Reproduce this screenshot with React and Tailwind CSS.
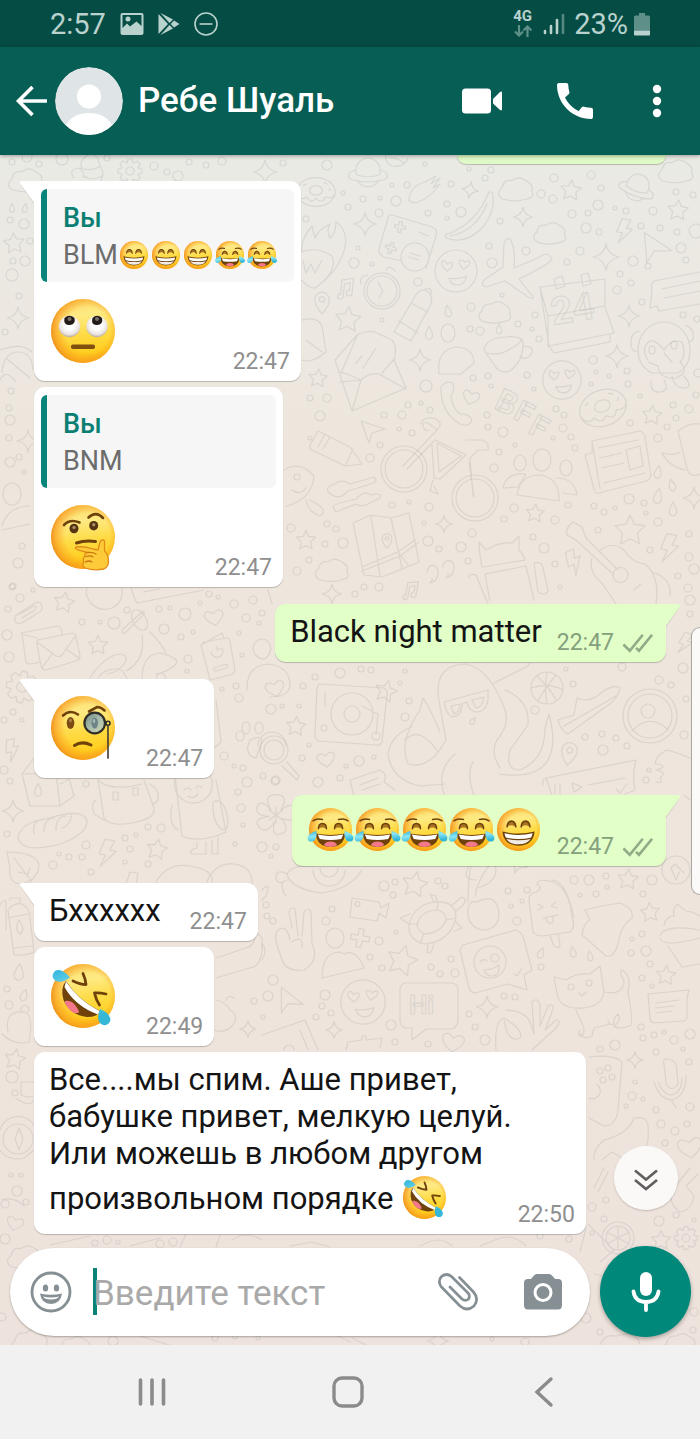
import { useState } from 'react'
import clsx from 'clsx'

/* ---------- emoji ---------- */

function EmojiDefs() {
  return (
    <svg className="absolute size-0" aria-hidden="true">
      <defs>
        <linearGradient id="face" x1="0.45" y1="0" x2="0.6" y2="1">
          <stop offset="0" stopColor="#fbdc6c" />
          <stop offset="0.25" stopColor="#feea84" />
          <stop offset="0.55" stopColor="#fedb45" />
          <stop offset="0.85" stopColor="#ffcf1e" />
          <stop offset="1" stopColor="#fbb01c" />
        </linearGradient>
        <radialGradient id="rim" cx="0.57" cy="0.48" r="0.58">
          <stop offset="0.6" stopColor="#f99a1c" stopOpacity="0" />
          <stop offset="0.86" stopColor="#f99a1c" stopOpacity="0.65" />
          <stop offset="1" stopColor="#ea8a1d" stopOpacity="0.95" />
        </radialGradient>
        <radialGradient id="eyeball" cx="0.5" cy="0.4" r="0.6">
          <stop offset="0.4" stopColor="#ffffff" />
          <stop offset="0.8" stopColor="#e9e3e0" />
          <stop offset="1" stopColor="#b9a79b" />
        </radialGradient>
        <linearGradient id="tear" x1="0" y1="0" x2="0.4" y2="1">
          <stop offset="0" stopColor="#2fb4dc" />
          <stop offset="0.5" stopColor="#8ce6f5" />
          <stop offset="1" stopColor="#35b8d8" />
        </linearGradient>
        <linearGradient id="lens" x1="0" y1="0" x2="1" y2="1">
          <stop offset="0" stopColor="#6f8780" />
          <stop offset="0.5" stopColor="#a9bcae" />
          <stop offset="1" stopColor="#d3d8b0" />
        </linearGradient>
      </defs>
    </svg>
  )
}

const BROWN = '#6f420c'

const faces = {
  beam: (
    <>
      <path d="M15 28Q16 19 21.500 19T28 28Q21.500 23 15 28ZM36 28Q37 19 42.500 19T49 28Q42.500 23 36 28Z" fill="#a87322" />
      <path d="M15 28Q16 19.500 21.500 19.500T28 28M36 28Q37 19.500 42.500 19.500T49 28" fill="none" stroke={BROWN} strokeWidth="2.4" strokeLinecap="round" />
      <path d="M8 35Q32 41 56 35Q54 56 32 56T8 35Z" fill={BROWN} />
      <path d="M11 37.500Q32 42.500 53 37.500L51 44Q32 48.500 13 44Z" fill="#fff" />
      <path d="M14 46Q32 50 50 46Q45 54 32 54T14 46Z" fill="#f1ebe4" />
    </>
  ),
  joy: (
    <>
      <path d="M6 19Q11 15 20 17M58 19Q53 15 44 17" fill="none" stroke={BROWN} strokeWidth="2.4" strokeLinecap="round" />
      <path d="M14 31Q14 23 20 23T26 31Q20 27 14 31ZM38 31Q38 23 44 23T50 31Q44 27 38 31Z" fill="#a87322" />
      <path d="M14 31Q14 23 20 23T26 31M38 31Q38 23 44 23T50 31" fill="none" stroke={BROWN} strokeWidth="2.2" strokeLinecap="round" />
      <path d="M10 38Q32 42 54 38Q52 58 32 58T10 38Z" fill={BROWN} />
      <path d="M13 39.500Q32 43.500 51 39.500L48 46Q32 49 16 46Z" fill="#fff" />
      <path d="M22 55Q25 50 32 50T42 55Q38 58 32 58T22 55Z" fill="#f4788a" />
      <path d="M11 34Q13 49 4 50Q-3 50-2 43Q0 38 11 34ZM53 34Q51 49 60 50Q67 50 66 43Q64 38 53 34Z" fill="url(#tear)" />
    </>
  ),
  roll: (
    <>
      <circle cx="18.500" cy="27.500" r="10.700" fill="url(#eyeball)" />
      <circle cx="46" cy="27.500" r="10.700" fill="url(#eyeball)" />
      <path d="M13.500 19Q18.500 14.500 23.500 19Q25 25.500 18.500 26T13.500 19ZM41.500 19Q46 14.500 51 19Q52.500 25.500 46 26T41.500 19Z" fill="#221a16" />
      <circle cx="18.500" cy="20" r="2" fill="#77706c" />
      <circle cx="46" cy="20" r="2" fill="#77706c" />
      <rect x="20" y="45.500" width="24" height="4.500" rx="1.800" fill="#80500f" />
    </>
  ),
  think: (
    <>
      <path d="M13 20Q19 13.500 28.500 17.500M37.500 12.500Q45 5.500 52 13" fill="none" stroke={BROWN} strokeWidth="2.6" strokeLinecap="round" />
      <ellipse cx="23" cy="23.500" rx="4.500" ry="4.800" fill="#553412" />
      <ellipse cx="42.700" cy="20.700" rx="4.500" ry="4.800" fill="#553412" />
      <circle cx="23" cy="22.500" r="1.700" fill="#a98c68" />
      <circle cx="42.700" cy="19.700" r="1.700" fill="#a98c68" />
      <path d="M25.500 38Q34 35 44.500 36.500" fill="none" stroke={BROWN} strokeWidth="3" strokeLinecap="round" />
      <path
        d="M25 42Q33 41 42 44L47 45L49 37Q51 33.500 53.500 36V46Q57.500 50 57.500 56T53 64Q43 66 34 63Q30 60 33 57Q31 54 34 51Q33 49 36 47.500L27 45Q23 43 25 42Z"
        fill="#fdcb3a"
        stroke="#e18c18"
        strokeWidth="1.300"
      />
      <path d="M35 51.500Q39 50 42 52M34.500 57Q38 55 41 57M36 47.500Q42 47 45 49" fill="none" stroke="#c7760f" strokeWidth="1.300" strokeLinecap="round" />
    </>
  ),
  monocle: (
    <>
      <path d="M12 19.500Q19 13 27 18.500M38 15.500L46 11Q50 11 53.500 14.500" fill="none" stroke={BROWN} strokeWidth="2.6" strokeLinecap="round" />
      <ellipse cx="19.500" cy="27" rx="3.800" ry="6" fill="#7a4a12" />
      <ellipse cx="19.500" cy="24.500" rx="1.500" ry="2" fill="#a67e4b" />
      <circle cx="43.700" cy="27" r="10.300" fill="url(#lens)" stroke="#2f2d28" strokeWidth="2.2" />
      <ellipse cx="43.700" cy="27" rx="3.300" ry="5.500" fill="#6d8488" />
      <ellipse cx="43" cy="25" rx="1.300" ry="2" fill="#a9bab8" />
      <circle cx="57" cy="27.300" r="2" fill="none" stroke="#2f2d28" strokeWidth="1.600" />
      <path d="M57 29.500V62" stroke="#4c4437" strokeWidth="1.700" strokeLinecap="round" />
      <path d="M23.500 49.500Q31 44.500 40 49" fill="none" stroke={BROWN} strokeWidth="3" strokeLinecap="round" />
    </>
  ),
  rofl: (
    <>
      <path d="M22 17Q29 20.500 35 20.500Q34.500 15 32 9.500M55 30Q48 28.500 43.500 29Q45 36 48.500 41" fill="none" stroke={BROWN} strokeWidth="2.8" strokeLinecap="round" strokeLinejoin="round" />
      <path d="M15 17Q27 36 49 47Q47 53 36 53Q19 51 12.500 36Q9 24 15 17Z" fill={BROWN} />
      <path d="M15 17.500Q27 36 48.500 47L47 50.500Q24 42 13.500 23Z" fill="#fff" />
      <path d="M14 37Q20 36 24 41T28 48.500Q23 51 18 45T14 37Z" fill="#f4788a" />
      <path d="M19 13.500Q10 20 4 16.500Q-1 12 4 7Q10 3 19 13.500ZM49 45Q59 49 59.500 56Q58 62 52 61Q44 58 49 45Z" fill="url(#tear)" />
    </>
  ),
}

function Emoji({ name, label, className }) {
  return (
    <svg viewBox="0 0 64 64" role="img" aria-label={label} className={clsx('overflow-visible', className)}>
      <circle cx="32" cy="32" r="32" fill="url(#face)" />
      <circle cx="32" cy="32" r="32" fill="url(#rim)" />
      {faces[name]}
    </svg>
  )
}

const BigEmoji = (props) => <Emoji {...props} className="mx-[2px] mt-2 mb-[6px] block size-16" />
const TextEmoji = (props) => <Emoji {...props} className="mx-[2px] mt-1 mb-[3px] inline-block size-[43px] align-[-13px]" />
const QuoteEmoji = (props) => <Emoji {...props} className="mx-[2px] inline-block size-7 align-[-5px]" />

/* ---------- wallpaper ---------- */

const shapes = {
  star: 'M0-12L3.500-4.500L12-3.500L6 2.500L7.500 11L0 7L-7.500 11L-6 2.500L-12-3.500L-3.500-4.500Z',
  sparkle: 'M0-12Q1.500-2 12 0Q1.500 2 0 12Q-1.500 2-12 0Q-1.500-2 0-12Z',
  cloud: 'M-10 7Q-15 3-10-1Q-9-7-3-6Q2-10 7-6Q13-3 11 1Q14 6 8 7Q0 10-10 7Z',
  bolt: 'M-4-12H5L2-3H8L-4 13L-1 2H-7Z',
  drop: 'M0-10Q7 2 5 6T0 10T-5 6T0-10Z',
  heart: 'M0 10Q-12 2-11-4Q-8-11 0-4Q8-11 11-4Q12 2 0 10Z',
  plane: 'M-12-10L12-2L-1 2L-4 12Z',
  plus: 'M-3-11H3V-3H11V3H3V11H-3V3H-11V-3H-3Z',
  note: 'M-4 8V-8L8-11V5A3 3 0 1 1 5 2V-6L-1-4V9A3 3 0 1 1-4 6',
  pin: 'M0 12Q-9 2-8-4A8 8 0 0 1 8-4Q9 2 0 12ZM-3-4A3 3 0 1 0 3-4A3 3 0 1 0-3-4',
  planet: 'M-8-2A8 8 0 0 1 8-2M-7 5A8 8 0 0 0 7 5M-8-2Q-15 0-12 4Q0 8 12 4Q15 0 8-2M-8-2V1Q0 4 8 1V-2',
  donut: 'M-12 0A12 9 0 1 1 12 0A12 9 0 1 1-12 0M-4-1A4 3 0 1 1 4-1A4 3 0 1 1-4-1M-12 1Q-9 6-6 3Q-3 8 0 4Q4 8 6 3Q10 5 12 1M-8-4L-6-5M5-6L7-5M8-1L9-2',
  face: 'M-12 0A12 12 0 1 1 12 0A12 12 0 1 1-12 0M-5 0Q-9-3-8-5T-5-4Q-2-6-2-4T-5 0M4-1Q1-5 2-6T5-5Q8-7 8-5T4-1M-4 4Q1 5 6 3Q5 8 1 8T-4 4',
  gear: 'M-2-12H2L3-8L7-10L10-7L8-3L12-2V2L8 3L10 7L7 10L3 8L2 12H-2L-3 8L-7 10L-10 7L-8 3L-12 2V-2L-8-3L-10-7L-7-10L-3-8ZM-4 0A4 4 0 1 0 4 0A4 4 0 1 0-4 0',
  flower: 'M-3-3Q-8-12 0-12T3-3Q11-9 12-2T3 2Q9 9 3 11T-1 4Q-6 12-10 7T-4 1Q-13 0-11-5T-3-3M-4-3L4 3M-4 3L4-3M0-5V5',
}

// kind, x, y, scale, rotation
const doodles = [
  ['planet', 368, 173, 1.5, 0], ['planet', 637, 188, 1.4, 20], ['donut', 316, 192, 1.6, 0], ['donut', 603, 408, 2, -20],
  ['sparkle', 470, 190, 0.7, 10], ['sparkle', 365, 224, 0.95, 0], ['sparkle', 523, 217, 0.8, 0], ['sparkle', 606, 257, 1.1, 0],
  ['sparkle', 629, 316, 0.9, 0], ['sparkle', 617, 356, 0.95, 0], ['sparkle', 420, 360, 0.9, 0], ['sparkle', 444, 524, 0.7, 0],
  ['sparkle', 332, 594, 0.8, 0], ['sparkle', 694, 498, 0.9, 0], ['sparkle', 18, 318, 0.9, 0], ['sparkle', 265, 172, 1, 0],
  ['sparkle', 28, 441, 0.9, 0], ['sparkle', 13, 811, 0.9, 0], ['sparkle', 487, 1007, 0.9, 0], ['sparkle', 334, 1030, 0.7, 0],
  ['sparkle', 635, 1060, 0.7, 0], ['sparkle', 248, 1029, 0.7, 0], ['sparkle', 438, 1341, 0.9, 0], ['sparkle', 518, 864, 0.8, 20],
  ['cloud', 516, 189, 1.4, 0], ['cloud', 550, 233, 1.3, 0], ['cloud', 676, 171, 1.4, 0], ['cloud', 495, 312, 1.3, 0],
  ['cloud', 332, 570, 1.35, 0], ['cloud', 26, 180, 1.4, 0], ['cloud', 25, 1257, 1.4, 0], ['cloud', 30, 1342, 1.5, 0],
  ['cloud', 680, 1344, 1.3, 0], ['cloud', 75, 1347, 1.3, 0],
  ['star', 571, 190, 0.85, 5], ['star', 678, 210, 0.85, 5], ['star', 348, 319, 1.05, 5], ['star', 318, 378, 0.75, 5],
  ['star', 652, 415, 0.8, 5], ['star', 535, 513, 0.75, 5], ['star', 630, 530, 1.25, 0], ['star', 306, 540, 0.8, 0],
  ['star', 14, 243, 0.85, -5], ['star', 386, 691, 0.9, 15], ['star', 296, 726, 0.8, 5], ['star', 64, 602, 0.85, 10],
  ['star', 98, 645, 0.8, 0], ['star', 157, 849, 0.85, 10], ['star', 15, 1059, 0.85, 10], ['star', 415, 884, 1.05, 10],
  ['star', 628, 879, 0.85, 5], ['star', 650, 912, 0.8, -5], ['star', 666, 975, 0.8, 5], ['star', 402, 960, 1.25, 15],
  ['star', 661, 1240, 0.8, 0],
  ['bolt', 624, 231, 1, 10], ['bolt', 669, 548, 1.15, 10], ['bolt', 574, 562, 1, -25], ['bolt', 107, 853, 1.1, 10],
  ['bolt', 12, 750, 0.9, -10], ['bolt', 685, 643, 0.85, 20],
  ['drop', 448, 311, 0.6, -10], ['drop', 429, 333, 0.65, 0], ['drop', 499, 329, 0.5, 0], ['drop', 658, 472, 0.65, 10],
  ['drop', 672, 485, 0.6, -15], ['drop', 658, 496, 0.75, 10], ['drop', 673, 509, 0.7, 0], ['drop', 19, 972, 0.85, 5],
  ['drop', 24, 995, 0.6, 20], ['drop', 541, 953, 0.55, 20], ['drop', 573, 952, 0.55, -10], ['drop', 590, 956, 0.5, -10],
  ['drop', 12, 208, 0.45, 0], ['drop', 25, 208, 0.45, 10], ['drop', 473, 721, 0.4, 40], ['drop', 38, 790, 0.65, 0],
  ['heart', 326, 759, 0.8, -10], ['heart', 471, 397, 0.75, 15], ['heart', 453, 1042, 1, 10], ['heart', 690, 1147, 1.1, -10],
  ['heart', 275, 688, 0.85, -15], ['heart', 214, 617, 0.85, -10], ['heart', 15, 1223, 0.75, 15],
  ['plane', 373, 431, 1, 0], ['plane', 656, 249, 1.3, 15], ['plane', 290, 1002, 1.1, 20],
  ['plus', 400, 227, 0.5, 10], ['plus', 391, 248, 0.5, 20], ['plus', 360, 938, 0.85, 10],
  ['note', 345, 288, 0.95, 5], ['note', 410, 590, 0.85, 10],
  ['pin', 322, 303, 0.9, 0], ['pin', 387, 541, 0.6, 0], ['pin', 569, 754, 0.95, 10],
  ['face', 456, 271, 1.75, 0], ['face', 562, 380, 1.6, 0], ['face', 363, 1002, 1.85, 0],
  ['gear', 130, 171, 1, 0], ['gear', 22, 687, 1.3, 10], ['gear', 686, 1238, 0.95, 0],
  ['flower', 276, 815, 1.7, 0],
]

// x, y, r
const bubbles = [
  [12, 162, 3], [27, 157, 5], [39, 164, 3], [62, 159, 6], [107, 158, 3], [154, 166, 4], [167, 172, 3], [178, 176, 5], [189, 162, 3], [206, 165, 3],
  [222, 161, 4], [283, 163, 3], [327, 165, 5], [10, 220, 3], [24, 224, 5], [30, 241, 3], [13, 261, 3], [25, 261, 5], [12, 275, 6], [19, 296, 3],
  [5, 332, 3], [306, 219, 3], [11, 391, 3], [9, 408, 3], [10, 420, 5], [9, 438, 3], [10, 462, 5], [19, 457, 3], [24, 472, 2], [22, 546, 3],
  [18, 563, 5], [13, 586, 3], [37, 541, 3], [310, 398, 3], [310, 438, 2], [297, 477, 3], [291, 528, 4], [309, 560, 3], [297, 571, 4],
  [425, 164, 2], [407, 185, 3], [392, 185, 2], [363, 199, 3], [380, 198, 2], [396, 201, 5], [343, 193, 2], [348, 207, 3], [379, 213, 4], [428, 213, 3],
  [451, 184, 3], [447, 204, 3], [461, 212, 5], [447, 218, 2], [469, 169, 2], [485, 178, 3], [491, 170, 3], [541, 194, 4], [553, 199, 4], [554, 178, 4],
  [591, 175, 4], [601, 188, 3], [598, 205, 5], [572, 214, 4], [588, 213, 3], [615, 208, 2], [626, 211, 3], [653, 211, 4], [676, 192, 3], [693, 195, 3],
  [500, 221, 3], [586, 228, 5], [599, 232, 3], [641, 226, 3], [660, 228, 3], [677, 232, 3], [696, 231, 7], [681, 248, 5], [686, 260, 3], [648, 266, 3],
  [633, 261, 5], [567, 262, 3], [580, 251, 4], [526, 251, 4], [492, 263, 5], [489, 246, 3], [358, 248, 2], [354, 263, 5], [372, 264, 2], [418, 282, 4],
  [502, 295, 2], [471, 307, 4], [470, 329, 3], [480, 331, 4], [518, 324, 3], [535, 315, 3], [532, 329, 2], [539, 339, 3], [617, 290, 4], [631, 283, 3],
  [620, 274, 3], [642, 302, 3], [683, 315, 3], [697, 319, 3], [382, 320, 2], [426, 386, 6], [408, 405, 3], [421, 403, 2], [430, 410, 3],
  [473, 378, 3], [488, 376, 3], [491, 386, 2], [527, 375, 3], [534, 389, 2], [593, 360, 4], [596, 372, 2], [609, 376, 2], [627, 371, 3], [591, 384, 2],
  [628, 384, 3], [640, 396, 2], [673, 405, 3], [689, 409, 4], [676, 418, 3], [667, 427, 3], [698, 373, 4], [696, 395, 3], [320, 416, 5], [327, 398, 4],
  [384, 415, 3], [402, 415, 4], [399, 429, 2], [412, 433, 3], [380, 445, 3], [370, 458, 4], [487, 415, 3], [488, 427, 3], [503, 432, 5], [515, 445, 2],
  [499, 452, 3], [556, 409, 3], [564, 415, 3], [563, 428, 4], [553, 438, 2], [571, 437, 3], [575, 448, 3], [494, 468, 4], [658, 438, 4], [630, 423, 3],
  [392, 505, 3], [409, 502, 2], [429, 507, 4], [514, 508, 4], [504, 519, 3], [472, 533, 4], [555, 520, 4], [568, 505, 3], [594, 506, 3], [604, 512, 3],
  [629, 499, 5], [644, 503, 3], [646, 513, 2], [658, 522, 4], [615, 508, 2], [598, 530, 3], [424, 523, 2], [428, 541, 5], [439, 549, 3], [461, 547, 5],
  [468, 561, 3], [533, 537, 3], [544, 548, 5], [555, 564, 3], [560, 587, 2], [650, 550, 3], [689, 534, 3], [689, 557, 4], [694, 569, 5], [678, 576, 3],
  [343, 543, 5], [336, 529, 3], [327, 524, 3], [325, 544, 3], [364, 587, 3], [379, 587, 4], [355, 594, 3], [688, 588, 4], [690, 600, 5], [690, 614, 3],
  [12, 587, 3], [20, 598, 4], [8, 609, 3], [33, 590, 2], [7, 635, 5], [9, 657, 5], [82, 622, 3], [100, 622, 2], [114, 623, 6], [127, 610, 3],
  [159, 609, 3], [170, 608, 2], [185, 614, 6], [164, 629, 5], [181, 637, 3], [193, 632, 2], [188, 659, 4], [187, 671, 2], [200, 603, 2], [209, 594, 3],
  [218, 597, 2], [234, 604, 4], [253, 600, 4], [246, 618, 4], [262, 613, 3], [259, 623, 2], [239, 633, 2], [242, 655, 2],
  [315, 677, 3], [340, 673, 5], [361, 669, 3], [371, 670, 3], [303, 686, 3], [271, 709, 5], [282, 706, 2], [299, 706, 2], [324, 728, 3], [405, 717, 4],
  [409, 701, 3], [400, 683, 2], [405, 671, 2], [566, 669, 2], [573, 684, 3], [622, 667, 4], [659, 680, 4], [671, 685, 3], [535, 710, 4], [585, 737, 3],
  [602, 734, 3], [616, 738, 3], [603, 750, 5], [627, 746, 3], [683, 668, 5], [684, 735, 4], [686, 699, 3], [302, 758, 3], [309, 745, 2], [346, 766, 2],
  [359, 761, 5], [374, 757, 2], [318, 782, 5], [340, 778, 3], [275, 781, 4], [646, 780, 3], [649, 770, 2], [4, 720, 3], [13, 712, 3], [22, 720, 2],
  [10, 781, 3], [4, 770, 4], [86, 784, 3], [7, 834, 3], [86, 845, 4], [59, 854, 2], [69, 857, 3], [82, 857, 3], [53, 865, 4], [91, 872, 3],
  [125, 838, 3], [136, 835, 2], [148, 827, 3], [161, 828, 4], [130, 849, 3], [125, 862, 2], [148, 864, 3], [235, 844, 2], [262, 847, 5], [276, 847, 3],
  [271, 856, 2], [241, 808, 4], [238, 792, 3], [247, 782, 5], [243, 825, 2], [263, 776, 3], [276, 780, 4], [239, 698, 4], [236, 686, 3], [222, 689, 2],
  [234, 766, 2], [243, 768, 3], [224, 756, 4], [7, 989, 3], [9, 1005, 4], [267, 916, 3], [266, 905, 3], [254, 1001, 3], [263, 1017, 2], [273, 980, 5],
  [268, 996, 5], [273, 921, 3], [326, 921, 4], [332, 909, 3], [396, 932, 2], [379, 941, 4], [370, 957, 3], [382, 968, 3], [431, 967, 3],
  [440, 974, 3], [451, 959, 3], [455, 973, 4], [384, 886, 5], [395, 882, 3], [393, 895, 3], [438, 881, 3], [445, 886, 3], [508, 891, 3], [527, 890, 3],
  [511, 906, 2], [517, 921, 4], [522, 901, 2], [574, 880, 4], [589, 880, 5], [606, 876, 3], [607, 887, 2], [580, 895, 2], [596, 894, 3], [652, 880, 5],
  [643, 894, 3], [642, 934, 3], [632, 939, 2], [631, 953, 3], [646, 951, 5], [650, 964, 3], [642, 978, 3], [652, 986, 2], [541, 967, 3], [504, 996, 3],
  [515, 997, 3], [469, 1014, 3], [475, 1027, 3], [485, 1040, 5], [428, 1044, 3], [395, 1042, 3], [391, 1025, 5], [331, 1013, 3], [325, 995, 5], [322, 1006, 3],
  [316, 1017, 3], [641, 1027, 3], [643, 1038, 3], [654, 1035, 3], [664, 1032, 2], [674, 1040, 4], [690, 1034, 5], [683, 1049, 2], [656, 1052, 3], [615, 1045, 5],
  [600, 1049, 3], [635, 1082, 2], [632, 1096, 4], [643, 1099, 2], [626, 1106, 2], [656, 1110, 3], [661, 1124, 4], [675, 1131, 4], [687, 1124, 3], [690, 1107, 4],
  [689, 1062, 3], [665, 1143, 3], [600, 1071, 3], [608, 1068, 3], [603, 1080, 3], [612, 1077, 3], [606, 1200, 3], [592, 1207, 4], [604, 1219, 3], [592, 1233, 2],
  [540, 1236, 3], [569, 1239, 3], [659, 1221, 5], [676, 1215, 3], [694, 1220, 2], [95, 1243, 3], [107, 1240, 4], [118, 1242, 2], [160, 1244, 4], [173, 1242, 4],
  [113, 1341, 5], [215, 1338, 3], [235, 1337, 2], [258, 1338, 2], [492, 1339, 2], [525, 1342, 4], [586, 1318, 5], [600, 1332, 3], [694, 1312, 4], [693, 1330, 3],
  [12, 1077, 6], [15, 1093, 3], [11, 1175, 2], [21, 1175, 2], [17, 1191, 5], [26, 1202, 3], [5, 1204, 4], [5, 1239, 5], [2, 1317, 4],
]

// one-off drawings, each on its own spot of the wallpaper
const drawings = [
  // open hand, banana, burning heart
  'M409 200Q410 186 425 182L436 176L431 184L440 178L433 188L440 184Q430 198 418 202Q411 204 409 200Z',
  'M445 235Q476 225 489 192L492 192Q497 210 482 228Q465 245 446 238ZM450 236Q475 232 487 204',
  'M301 280Q313 292 318 286Q344 266 346 240Q344 226 336 222Q336 234 330 238Q326 230 330 224Q318 230 315 238L312 226Q300 240 302 252M301 252Q318 246 332 256Q338 270 318 286',
  'M303 261L306 273L311 264L315 273L322 260',
  // calculator
  'M392 215L432 227Q438 229 436 236L426 268M402 261L384 257Q378 254 379 249L388 218Q389 214 392 215M401 257A14 14 0 1 1 429 257A14 14 0 1 1 401 257M410 253L420 256M409 257L419 260M419 232L428 236',
  // alarm clock
  'M364 291A18 18 0 1 1 400 291A18 18 0 1 1 364 291M367 291A15 15 0 1 1 397 291A15 15 0 1 1 367 291M378 282L383 291L379 298M361 284Q359 276 368 275M386 270Q388 264 395 271',
  // airplane
  'M504 244Q506 236 511 240Q516 252 514 268L538 258Q548 250 552 259Q550 264 519 279L533 297Q534 300 528 297L505 281L486 287Q480 286 484 280L503 267Z',
  // water bottle
  'M394 332L414 298Q419 289 425 290Q434 294 431 304L411 341ZM399 321L418 333M411 303L428 312M424 290L428 288L432 291L430 295',
  // envelope
  'M335 360L357 335Q366 330 375 332L392 340Q398 346 394 360L406 388L352 411ZM341 373L357 336M339 382L361 380L352 411M361 380Q370 372 379 374L406 389M341 372Q355 377 361 380M395 358L382 373M356 363L362 356M363 368L376 348',
  // person with a heart
  'M441 333A7 9 0 1 1 455 333A7 9 0 1 1 441 333M439 374Q436 350 456 347Q474 348 474 363L461 374Z',
  // coffee cup
  'M484 350Q486 338 505 337Q522 335 523 343Q524 360 510 371Q500 374 495 366ZM486 353Q500 356 510 349Q520 344 522 339M523 346Q534 346 532 353Q526 362 520 356',
  // calendar
  'M540 287L605 279V307L614 333L549 346ZM540 287L548 317V347M554 279L562 276L565 286L556 289ZM581 275L588 273L591 284L583 286ZM549 346L554 353L610 342V335M548 316L605 306',
  // chat bubble with lines
  'M700 272L654 281Q650 284 652 290L650 308L657 306L659 311L700 304M662 289L700 281M664 298L700 291',
  // monkey
  'M638 350A26 28 0 1 1 690 350Q690 366 678 373H652Q638 366 638 350M640 331Q630 332 631 345Q632 352 638 352M685 325Q695 328 693 340Q690 343 688 340M648 360Q640 348 650 341Q656 340 664 350Q672 338 682 342Q687 356 680 362Q690 372 676 378Q660 380 658 366L648 362M664 353L672 362M651 381Q650 393 660 392T664 380M672 376Q674 388 684 388T684 376',
  'M649 350A3 4 0 1 0 655 350A3 4 0 1 0 649 350M671 345A3 4 0 1 0 677 345A3 4 0 1 0 671 345',
  // phone receiver
  'M441 387Q446 380 453 383Q455 390 451 396Q452 408 460 414Q468 413 472 420Q469 428 460 424Q440 412 441 387Z',
  // crayon
  'M310 445L318 431L350 447L362 464L345 466L310 449ZM318 447L325 434M323 449L330 437M345 466L353 449',
  // bicycle
  'M381 469A23 23 0 1 1 427 469A23 23 0 1 1 381 469M385 469A19 19 0 1 1 423 469A19 19 0 1 1 385 469M452 498A23 23 0 1 1 498 498A23 23 0 1 1 452 498M456 498A19 19 0 1 1 494 498A19 19 0 1 1 456 498',
  'M403 466L437 430Q424 418 423 425Q424 432 429 430M437 430Q445 422 433 418Q422 417 421 424M407 469L435 440L466 455L440 479L434 478L432 445M437 443L439 472L461 456ZM469 462L474 497M466 440H482Q490 442 488 450H478L470 458L473 496M433 480L430 491L438 494L434 486',
  // group of people
  'M533 460A9 11 0 1 1 551 460A9 11 0 1 1 533 460M514 463A6 8 0 1 1 526 463A6 8 0 1 1 514 463M560 468A6 8 0 1 1 572 468A6 8 0 1 1 560 468M517 495Q520 475 540 475Q560 478 559 501ZM503 488Q506 472 526 474L518 487ZM556 478Q575 478 577 495L563 493',
  // newspaper
  'M592 441L640 431Q644 432 645 437L651 475Q650 480 646 481L599 493Q595 494 594 489L585 455L592 453ZM592 441L600 489M598 448L638 440M600 458L622 453M602 468L624 463M604 483L645 473M626 450L640 446L643 466L630 470Z',
  // mug
  'M678 431Q690 422 700 424M678 431L687 469Q690 478 700 474M662 453Q674 456 680 452M662 453Q668 466 685 470',
  // spoons
  'M328 492Q326 486 333 485Q342 478 350 484L374 477Q378 480 374 483L348 491Q340 500 332 495ZM333 507Q333 504 356 499Q364 490 371 495Q382 492 380 498L370 503Q362 508 356 504L336 512Z',
  // map
  'M353 523L371 515L391 518L409 513L419 562L382 577L364 575ZM371 516L380 576M391 518L402 568M362 567L398 552L415 540M362 571L400 556L418 543M398 552L408 565',
  // android robot
  'M482 567L480 556L479 542L486 550Q498 542 512 543L519 536V550Q524 555 525 560L483 567ZM485 574L526 566L534 600M485 574L490 601M469 578Q468 573 476 575L488 604M534 563Q542 561 543 568L548 590Q546 597 538 592Z',
  // guitar
  'M567 535Q565 528 573 522L582 527L586 538L618 570M567 535L576 540L614 575M613 575A7 7 0 1 0 628 575A7 7 0 1 0 613 575M600 550Q612 541 624 550Q632 563 645 564Q660 576 656 604M592 558Q588 572 602 583L616 604M652 572Q672 578 670 596M634 590L641 584',
  // quotation marks
  'M427 572A5 6 0 1 1 438 572Q438 582 430 583Q433 580 432 578M443 567A5 6 0 1 1 454 567Q454 576 446 578Q449 576 448 574',
  // paper clip
  'M15 616L35 603Q42 600 42 608Q42 612 36 614L22 623Q14 625 15 618ZM22 618L35 610Q38 606 34 606L20 614',
  // letters
  'M37 638L22 634Q20 632 26 632L58 626Q62 627 62 634M22 634L26 662Q28 666 40 662M38 640L72 633Q76 634 76 637L80 656Q80 660 76 661L46 670Q42 670 41 666L37 644Q36 641 38 640ZM37 642L56 656Q62 658 64 652L76 635M42 668L52 654M79 658L66 649',
  // bird, headphones, cup
  'M87 588Q84 596 92 604Q100 612 112 608Q124 602 122 588M122 630L143 611Q146 612 142 616L126 632Q122 636 122 630ZM133 622A6 10 -30 1 0 146 618A6 10 -30 1 0 133 622M142 635Q146 660 126 671M150 632Q162 644 166 653M90 678Q104 656 120 654Q130 656 124 664Q118 672 108 674M98 678Q106 666 122 670L128 680M142 680Q142 654 160 653Q180 658 176 664Q168 672 156 674M156 680A5 7 0 1 1 166 680',
  // passport
  'M201 645L222 633L224 639M201 645L204 642L226 638Q230 638 230 642L235 670Q234 674 230 675L210 680ZM211 652A6 6 0 1 0 222 648L217 650V646M214 668L226 664Q229 666 226 668L216 671Q213 671 214 668Z',
  // newspaper corner, balloon, heart bubble
  'M131 588L136 602Q138 604 142 602L204 590M143 592L160 589M253 649A9 10 0 1 1 271 649Q268 660 262 659Q254 656 253 649M268 590L272 604M247 690Q246 666 268 664Q290 666 290 686Q288 697 270 697',
  // dinosaur and friends around the quotes
  'M0 350Q22 342 32 352M2 372Q4 352 18 352T33 370M6 358L30 378M0 380Q6 368 16 382M302 320Q318 316 322 326L326 352Q312 364 302 360M306 340L322 352M284 470Q300 460 314 476Q312 500 286 506M292 490Q300 496 306 488M310 500Q330 510 320 516Q308 512 306 500M2 530L30 524M2 526Q8 506 30 506M3 494A9 11 0 1 1 21 494A9 11 0 1 1 3 494',
  // turntable
  'M319 684L384 688Q388 690 387 695L382 742Q380 746 376 745L318 741Q314 738 315 734L317 688ZM331 714A21 21 0 1 1 373 714A21 21 0 1 1 331 714M344 714A8 8 0 1 1 360 714A8 8 0 1 1 344 714M362 706L378 714L376 734M325 692V706M372 736A4 4 0 1 1 380 736A4 4 0 1 1 372 736',
  // octopus with sunglasses
  'M438 695Q436 665 465 664Q490 668 505 710Q510 725 497 740Q490 752 500 768M438 695L446 740Q430 770 408 764Q398 742 420 710L423 698Q432 712 440 732M388 755Q390 735 412 727M388 755Q392 780 420 786L445 784M444 794Q436 770 455 754M474 795Q466 774 473 762M505 690Q530 700 528 725L510 750Q505 770 520 770Q545 760 545 728L549 714Q556 740 550 756Q540 780 500 774M492 684L520 670Q532 665 530 660M405 740Q420 725 438 752',
  'M444 702L488 690V700Q486 712 476 712Q468 710 467 702L462 704Q462 716 452 717Q446 714 444 702ZM451 706L460 704Q460 712 454 714ZM472 700L484 697Q482 708 476 708Z',
  // basketball
  'M531 688A16 16 0 1 1 563 688A16 16 0 1 1 531 688M537 676Q550 688 556 700M556 675Q545 688 538 701M531 688Q548 682 563 690M547 672Q544 688 547 704',
  // sneaker
  'M558 720L574 715L577 698Q590 704 602 692Q614 684 620 688Q618 700 604 708L568 734Q560 730 558 720ZM564 726L616 696',
  // contact badge
  'M623 716A27 27 0 1 1 677 716A27 27 0 1 1 623 716M628 716A22 22 0 1 1 672 716A22 22 0 1 1 628 716M641 711A7 7 0 1 1 655 711A7 7 0 1 1 641 711M632 731Q650 712 668 730',
  // voice card
  'M543 785Q542 780 546 778L636 760Q632 775 635 790L625 794M546 778L552 795M572 783L582 787L574 792ZM588 785L625 778M555 784V794M560 784V794M616 789L620 793L627 784',
  'M655 764Q656 756 664 752Q664 748 680 754L690 758M656 770Q668 772 660 778Q664 784 656 782M656 764Q670 766 656 770M684 795L690 800',
  // magnifier
  'M260 750A14 14 0 1 1 288 750A14 14 0 1 1 260 750M264 750A10 10 0 1 1 284 750A10 10 0 1 1 264 750M282 766L297 780L299 776L287 762',
  'M350 780L380 770Q388 774 384 782L395 790M350 780L354 796M360 785L378 778M362 790L380 784',
  // paw and camera
  'M250 740Q262 734 262 742L256 758Q246 756 248 746ZM258 746A14 14 0 1 1 286 746M236 736A4 5 0 1 1 244 736A4 5 0 1 1 236 736M242 728A4 6 0 1 1 250 728A4 6 0 1 1 242 728M255 728A4 6 0 1 1 263 728A4 6 0 1 1 255 728M216 700L221 742L214 748',
  // milk carton
  'M22 774L34 758L56 757L68 774L74 796L60 806L30 806ZM22 774L56 773L60 806M34 758V768M56 773L72 770M60 784L68 780',
  // bread
  'M18 838Q20 822 50 818Q82 808 87 820Q88 834 60 844Q22 854 18 838ZM34 834Q32 820 42 820M44 832Q44 818 54 818M56 830Q56 816 66 816M62 828Q70 826 72 814',
  // backpack
  'M98 780Q110 792 142 784M98 780L104 818Q110 828 136 822Q156 818 154 808L144 780M96 800Q90 804 94 814L104 820M150 784Q160 790 158 800L154 804M113 792H118V800H113ZM133 788H138V795H133Z',
  // astronaut
  'M175 780A18 18 0 1 1 212 788A18 18 0 1 1 175 780M175 775L182 836Q200 844 226 832L216 780M184 790Q188 786 191 790M196 788Q199 784 202 788M188 796Q193 800 198 794M172 805Q168 825 178 830M213 802Q224 796 228 820Q228 834 220 828Q212 820 213 802M197 842V848Q188 850 192 854H206V842M212 840V854H218V838',
  // leaf
  'M7 852Q36 852 39 865Q38 880 22 884Q8 884 10 868ZM14 858L32 882M18 872L28 874L30 868',
  // bottle on the left
  'M8 910Q14 902 22 904Q30 908 30 918L34 952Q26 956 14 955ZM10 900V898H20V903M8 918L28 914M19 920Q26 930 20 934Q14 930 19 920M14 948L32 946',
  // bell
  'M8 1032Q4 1010 24 1012Q34 1014 29 1042Q14 1046 2 1034M22 1012A4 4 0 1 1 28 1012',
  // compass
  'M0 1130A19 19 0 1 1 34 1146M0 1150Q8 1162 24 1158L34 1150M3 1139A15 15 0 1 1 33 1139A15 15 0 1 1 3 1139M19 1128L23 1139L19 1150L15 1139ZM21 1082V1095Q28 1098 34 1096M21 1082H34M17 1099Q32 1108 33 1100',
  // things right of the short bubbles
  'M155 884Q166 862 190 866T212 882M206 884Q214 862 234 864T252 888M126 884L130 872L138 873L136 884M216 958L246 948Q258 944 254 930L262 938Q264 966 250 968L216 978M216 1000Q226 1002 230 1010Q240 1016 232 1026Q224 1034 214 1030M226 1000Q228 994 234 998',
  // fish
  'M287 874Q292 864 316 866M287 874Q290 888 320 893Q350 890 362 870M313 870A15 15 0 0 0 345 870M320 868A9 9 0 0 0 338 868M287 874Q276 868 276 878Q278 886 287 880M282 882Q282 892 286 896',
  // camcorder
  'M352 898L379 902L381 908L389 903L386 918L379 913L377 921L350 917ZM355 904A2 2 0 1 1 360 904A2 2 0 1 1 355 904',
  // turtle
  'M409 925Q414 905 434 902Q456 900 456 918Q450 942 424 944Q408 940 409 925ZM417 925Q420 912 434 910Q446 910 446 920Q442 932 426 934Q418 932 417 925ZM434 902L430 894L436 896L437 902M451 906L462 897Q468 900 462 906L456 911M456 922L462 928L454 931M428 944L427 952Q432 956 434 942M409 924L400 918L410 914M437 910L438 902M446 920L456 918M424 934L420 943M418 924H409',
  // cherry
  'M468 902Q468 888 470 870Q472 862 480 860M477 902Q498 892 499 915Q498 930 482 930Q466 926 468 908Q470 900 477 902M476 896L476 890Q484 868 494 862Q502 880 478 888M476 880Q460 880 470 864',
  // ice cream
  'M529 900L533 932Q536 936 542 936L570 932Q576 926 572 918Q570 890 554 882Q538 878 537 884Q544 888 536 892Q528 894 529 900M552 880Q566 880 574 918M550 936L554 946Q560 950 560 944L558 934M538 904L543 907L538 910M556 902L551 906L557 908M543 918L558 915M546 918Q548 926 553 922V916',
  // splash
  'M585 910Q604 905 620 903Q634 908 632 918Q620 926 618 944Q614 958 606 956Q588 940 582 935Q584 922 590 920Z',
  // peace hand
  'M289 912Q290 906 295 909L298 936M302 936L304 912Q308 906 311 912L312 944Q320 960 304 970Q286 972 282 960L276 942Q274 930 282 928Q288 928 290 940M289 912L292 928M292 942Q304 934 302 948',
  // person
  'M326 938A9 10 0 1 1 344 938A9 10 0 1 1 326 938M322 978Q322 952 340 952L344 954Q356 948 364 968Z',
  // sticker bubble
  'M463 945L516 930Q522 932 524 940L532 970L524 975L527 990L508 984L475 993Q470 992 469 988L460 950ZM474 962A16 16 0 1 1 506 962A16 16 0 1 1 474 962M480 962Q484 958 487 961M491 958A4 4 0 1 1 499 958A4 4 0 1 1 491 958M484 970Q492 970 499 965Q500 976 492 976Q486 976 484 970M514 974L517 976L522 968',
  // chat bubble with greeting
  'M405 983H452Q458 984 458 990V1022Q456 1028 452 1029H426L412 1040V1028H405Q400 1026 400 1020V988Q401 984 405 983Z',
  // cat
  'M554 977L566 980Q578 972 590 974L600 966L604 992Q602 1006 584 1008Q560 1010 557 994ZM604 992Q624 996 624 980Q618 972 622 970Q632 976 628 992Q634 1024 630 1026Q618 1030 614 1026Q622 1020 618 1014Q612 1020 614 1024Q608 1026 608 1020M576 1010L584 1028Q584 1038 580 1034Q584 1040 592 1036L594 1028L610 1024M580 1030Q576 1036 584 1037M579 993L582 996L586 992M568 987A3 3 0 1 1 574 987A3 3 0 1 1 568 987M586 983A3 3 0 1 1 592 983A3 3 0 1 1 586 983',
  // ok hand
  'M496 1050Q494 1020 504 1018Q524 1030 520 1038Q508 1044 504 1020M506 1010Q524 1010 530 1022L534 1034M534 1034L532 1002Q538 996 540 1006V1026L548 1006Q556 1002 552 1012L545 1030L556 1020Q562 1020 556 1028L532 1050',
  // message card
  'M648 994L689 990L687 998V1018Q686 1021 682 1021L654 1023Q650 1022 650 1018ZM656 1003L679 1000M655 1008L674 1006M656 1013L672 1011',
  // cupcake
  'M664 925Q666 916 674 916Q672 908 678 904Q684 912 692 912L700 916M660 935Q666 924 700 930M660 938Q662 948 700 938M668 946L682 967L700 964',
  'M662 870A14 14 0 1 1 690 870A14 14 0 1 1 662 870M671 868L675 864L684 873M671 868L676 880L679 872',
  // gamepad and pan
  'M589 1057Q614 1054 622 1062L618 1110Q616 1126 604 1126L589 1118M589 1098A7 7 0 0 0 596 1084M594 1160Q592 1150 604 1140Q628 1134 634 1118Q648 1116 648 1126Q650 1148 640 1158M602 1160L612 1152L622 1158',
  // microphone
  'M664 1064Q662 1058 668 1059T676 1064L678 1084Q674 1090 670 1088T666 1082ZM654 1082Q660 1100 672 1100Q686 1096 686 1076M658 1082Q664 1096 672 1095Q682 1092 682 1078M671 1100L676 1108',
  // tickets and signpost
  'M262 1035L305 1020L318 1050M300 1030L308 1050M284 1050A5 5 0 1 1 294 1050M346 1050L348 1042L362 1040V1036H366V1040L382 1038L380 1048',
  // brush, cocktail, juice
  'M690 1168Q680 1180 672 1192Q668 1204 680 1212Q692 1210 694 1196L686 1186L698 1174M594 1188L604 1168M598 1192L608 1172M602 1238A16 16 0 1 1 634 1238A16 16 0 1 1 602 1238M606 1238A12 12 0 1 1 630 1238A12 12 0 1 1 606 1238M618 1226V1250M607 1232L629 1244M607 1244L629 1232M588 1224L614 1250L600 1262M586 1228L580 1252M594 1274L602 1276',
  'M50 1245L90 1236M130 1246L160 1238M180 1247L186 1234M216 1247L220 1235M232 1240Q246 1230 262 1240M290 1246L312 1242L330 1247M420 1246Q440 1234 452 1246M480 1246L500 1238Q515 1234 526 1246',
  'M140 1336L172 1346M316 1336Q330 1330 350 1342M600 1345Q604 1334 616 1336Q636 1330 640 1344M368 1346L352 1338',
  // ice cream swirl on the top edge
  'M74 178Q68 170 78 168Q84 170 84 178M82 168Q78 160 90 154Q98 154 100 166Q106 174 100 182M80 168Q92 172 100 166M84 176Q92 182 102 176',
  'M0 905Q6 896 6 905V930M2 1200Q14 1196 24 1206M262 890Q272 880 266 896L262 900M262 944Q268 950 262 960',
  'M404 163Q396 157 390 158M386 155Q384 162 392 166Q404 168 408 158',
]

function Wallpaper() {
  return (
    <svg
      viewBox="0 155 700 1190"
      preserveAspectRatio="xMidYMin slice"
      className="absolute inset-0 size-full"
      fill="none"
      stroke="#8b9390"
      strokeOpacity="0.2"
      strokeWidth="1.2"
      strokeLinecap="round"
      strokeLinejoin="round"
      aria-hidden="true"
    >
      {doodles.map(([kind, x, y, scale, turn], i) => (
        <path key={i} d={shapes[kind]} transform={`translate(${x} ${y}) rotate(${turn}) scale(${scale})`} vectorEffect="non-scaling-stroke" />
      ))}
      {bubbles.map(([x, y, r], i) => (
        <circle key={i} cx={x} cy={y} r={r} />
      ))}
      {drawings.map((d, i) => (
        <path key={i} d={d} />
      ))}
      <g className="font-[Roboto,sans-serif] font-bold">
        <text x="553" y="325" fontSize="38" transform="rotate(-9 553 325)">24</text>
        <text x="409" y="1014" fontSize="26">Hi</text>
        <text x="493" y="408" fontSize="32" transform="rotate(25 493 408)">B</text>
        <text x="512" y="418" fontSize="30" transform="rotate(28 512 418)">F</text>
        <text x="527" y="432" fontSize="30" transform="rotate(28 527 432)">F</text>
      </g>
    </svg>
  )
}

/* ---------- bars ---------- */

function StatusBar() {
  return (
    <div className="flex h-[47px] items-center bg-[#054c44] pr-[50px] pl-[50px] text-[29px] leading-8 text-[#b9d2cd]">
      <span>2:57</span>
      <svg viewBox="0 0 24 24" className="ml-[14px] size-6" fill="currentColor" aria-hidden="true">
        <path fillRule="evenodd" d="M2.500 1H21.500Q23.500 1 23.500 3V21Q23.500 23 21.500 23H2.500Q.500 23 .500 21V3Q.500 1 2.500 1ZM2.500 3V16L7 11.500L10 14.500L16.500 9.500L21.500 14V3ZM8 4.500A2.500 2.500 0 1 1 8 9.500A2.500 2.500 0 1 1 8 4.500Z" />
      </svg>
      <svg viewBox="0 0 24 24" className="ml-[13px] size-6" fill="currentColor" aria-hidden="true">
        <path d="M1.500 2V22L11 12ZM3.500 1L16 7.500L12.500 11ZM3.500 23L16 16.500L12.500 13ZM17 8.500L22.500 12L17 15.500L13.700 12Z" />
      </svg>
      <svg viewBox="0 0 24 24" className="ml-[13px] size-6" fill="none" stroke="currentColor" strokeWidth="1.600" aria-hidden="true">
        <circle cx="12" cy="12" r="11" />
        <path d="M5.500 12H18.500" />
      </svg>
      <div className="ml-auto flex w-[19px] flex-col items-center">
        <span className="text-[15px] leading-3 font-bold">4G</span>
        <svg viewBox="0 0 18 12" className="mt-[3px] h-3 w-[18px] opacity-50" fill="none" stroke="currentColor" strokeWidth="2.2" aria-hidden="true">
          <path d="M5 0V10M1 6.500L5 10.500L9 6.500M13.500 12V1.500M9.500 5.500L13.500 1.500L17.500 5.500" />
        </svg>
      </div>
      <svg viewBox="0 0 22 24" className="ml-[11px] h-6 w-[22px]" stroke="currentColor" strokeWidth="2.600" strokeLinecap="round" aria-hidden="true">
        <path d="M2 21V19M8 21V14M14 21V8" />
        <path d="M20 21V3" opacity="0.45" />
      </svg>
      <span className="ml-[9px]">23%</span>
      <svg viewBox="0 0 16 24" className="ml-[6px] h-6 w-4" fill="currentColor" aria-hidden="true">
        <path d="M5 1H11V3.500H14.500Q16 3.500 16 5V18.500H0V5Q0 3.500 1.500 3.500H5Z" opacity="0.5" />
        <path d="M0 18.500H16V22.500Q16 23.500 15 23.500H1Q0 23.500 0 22.500Z" />
      </svg>
    </div>
  )
}

function Header() {
  return (
    <header className="relative z-10 flex h-[108px] items-center bg-[#075e54] pr-[38px] pl-[15px] text-white shadow-[0_1px_4px_rgba(0,0,0,0.35)]">
      <button aria-label="Назад">
        <svg viewBox="0 0 32 32" className="size-8" fill="none" stroke="currentColor" strokeWidth="3.600">
          <path d="M17.500 2L3.500 16L17.500 30M3.500 16H32" />
        </svg>
      </button>
      <svg viewBox="0 0 68 68" className="ml-2 size-[68px] rounded-full" aria-hidden="true">
        <circle cx="34" cy="34" r="34" fill="#dfe5e7" />
        <circle cx="34" cy="29.500" r="12" fill="#fff" />
        <path d="M11 58Q18 46 34 46T57 58Q48 68 34 68T11 58Z" fill="#fff" />
      </svg>
      <h1 className="ml-[15px] text-[35px] leading-10 font-medium">Ребе Шуаль</h1>
      <button aria-label="Видеозвонок" className="ml-auto">
        <svg viewBox="0 0 42 26" className="h-[26px] w-[42px]" fill="currentColor">
          <rect x="1" y="0.500" width="29" height="25" rx="3.500" />
          <path d="M32 11L38.500 4.500Q41 2.500 41 5V21Q41 23.500 38.500 21.500L32 15.500Z" />
        </svg>
      </button>
      <button aria-label="Позвонить" className="ml-[54px]">
        <svg viewBox="3 3 18 18" className="size-9" fill="currentColor">
          <path d="M20.010 15.380c-1.230 0-2.420-.2-3.530-.56-.35-.12-.74-.03-1.010.24l-1.570 1.970c-2.830-1.350-5.480-3.900-6.890-6.830l1.950-1.660c.27-.28.350-.67.240-1.020-.37-1.110-.56-2.300-.56-3.530 0-.54-.45-.99-.99-.99H4.190C3.650 3 3 3.240 3 3.990 3 13.280 10.730 21 20.010 21c.71 0 .99-.63.990-1.180v-3.450c0-.54-.45-.99-.99-.99z" />
        </svg>
      </button>
      <button aria-label="Меню" className="ml-[59px]">
        <svg viewBox="0 0 10 34" className="h-[34px] w-[10px]" fill="currentColor">
          <circle cx="5" cy="5" r="4.200" />
          <circle cx="5" cy="17" r="4.200" />
          <circle cx="5" cy="29" r="4.200" />
        </svg>
      </button>
    </header>
  )
}

/* ---------- messages ---------- */

function Tail({ out }) {
  return (
    <svg
      viewBox="0 0 15 24"
      className={clsx('absolute top-0 h-6 w-[15px]', out ? '-right-[14px] -scale-x-100 text-[#e1ffc7]' : '-left-[14px] text-white')}
      aria-hidden="true"
    >
      <path d="M1 3.500L14 22.500" fill="none" stroke="#000" strokeOpacity="0.12" />
      <path d="M15 0H1.500Q-1 .500 .500 3L14 21.500H15Z" fill="currentColor" />
    </svg>
  )
}

function Ticks() {
  return (
    <svg viewBox="0 0 32 20" className="ml-2 h-5 w-[31px]" fill="none" stroke="#8fab88" strokeWidth="2.700" aria-label="Доставлено" role="img">
      <path d="M1.500 11.500L8 18L21.500 1.500M14.500 15L17.500 18L31 1.500" />
    </svg>
  )
}

function Quote({ author, children }) {
  return (
    <blockquote className="mx-[7px] mt-2 min-w-[235px] rounded-md border-l-[6px] border-[#08857a] bg-[#f6f6f6] pt-[11px] pr-4 pb-2 pl-4 text-[27px] leading-[37px] text-[#6c6c6c]">
      <cite className="block font-medium text-[#0b7f74] not-italic">{author}</cite>
      <p className="h-[37px] whitespace-nowrap">{children}</p>
    </blockquote>
  )
}

function Message({ out, first, tight, quote, time, children }) {
  return (
    <li
      className={clsx(
        'relative w-fit rounded-[11px] shadow-[0_1px_1px_rgba(0,0,0,0.22)]',
        out ? 'self-end bg-[#e1ffc7]' : 'self-start bg-white',
        first ? 'mt-[17px]' : 'mt-[6px]',
        first && (out ? 'rounded-tr-none' : 'rounded-tl-none'),
      )}
    >
      {first && <Tail out={out} />}
      {quote}
      <div className="flex items-end justify-between pl-[15px]">
        <div className="pt-[9px] pb-3 text-[31px] leading-[37px] whitespace-pre-line text-[#141414]">{children}</div>
        <div className={clsx('flex items-center pb-[7px]', out ? 'pr-[13px] pl-[15px]' : 'pr-[11px]', !out && (tight ? 'pl-[6px]' : 'pl-[29px]'))}>
          <time className={clsx('text-[23px] leading-6', out ? 'text-[#84a07c]' : 'text-[#8f8f8f]')}>{time}</time>
          {out && <Ticks />}
        </div>
      </div>
    </li>
  )
}

const beam = { name: 'beam', label: '😁' }
const joy = { name: 'joy', label: '😂' }

function Conversation() {
  return (
    <ul className="relative flex flex-1 flex-col px-[34px]">
      <li className="h-[9px] w-[209px] self-end rounded-b-[11px] bg-[#dffac6] shadow-[0_1px_1px_rgba(0,0,0,0.22)]" />
      <Message
        first
        time="22:47"
        quote={
          <Quote author="Вы">
            BLM
            {[beam, beam, beam, joy, joy].map((e, i) => (
              <QuoteEmoji key={i} {...e} />
            ))}
          </Quote>
        }
      >
        <BigEmoji name="roll" label="🙄" />
      </Message>
      <Message time="22:47" quote={<Quote author="Вы">BNM</Quote>}>
        <BigEmoji name="think" label="🤔" />
      </Message>
      <Message out first time="22:47">
        Black night matter
      </Message>
      <Message first time="22:47">
        <BigEmoji name="monocle" label="🧐" />
      </Message>
      <Message out first time="22:47">
        <div className="flex">
          {[joy, joy, joy, joy, beam].map((e, i) => (
            <TextEmoji key={i} {...e} />
          ))}
        </div>
      </Message>
      <Message first time="22:47">
        Бхххххх
      </Message>
      <Message time="22:49">
        <BigEmoji name="rofl" label="🤣" />
      </Message>
      <Message tight time="22:50">
        {'Все....мы спим. Аше привет,\nбабушке привет, мелкую целуй.\nИли можешь в любом другом\nпроизвольном порядке '}
        <TextEmoji name="rofl" label="🤣" />
      </Message>
    </ul>
  )
}

/* ---------- bottom ---------- */

function Composer() {
  const [text, setText] = useState('')

  return (
    <form className="relative flex items-center gap-[10px] pt-[11px] pr-[9px] pb-2 pl-[10px]" onSubmit={(e) => e.preventDefault()}>
      <div className="flex h-[88px] min-w-0 flex-1 items-center rounded-full bg-white pr-[27px] pl-5 text-[#868f93] shadow-[0_1px_2px_rgba(0,0,0,0.3)]">
        <button type="button" aria-label="Эмодзи">
          <svg viewBox="0 0 42 42" className="size-[42px]">
            <circle cx="21" cy="21" r="19" fill="none" stroke="currentColor" strokeWidth="2.800" />
            <ellipse cx="15.500" cy="17" rx="2.700" ry="3.500" fill="currentColor" />
            <ellipse cx="26.500" cy="17" rx="2.700" ry="3.500" fill="currentColor" />
            <path fillRule="evenodd" d="M10 22.500Q21 25 32 22.500Q30.500 33 21 33T10 22.500ZM13 25.500Q21 27.500 29 25.500Q27.500 28.500 21 28.500T13 25.500Z" fill="currentColor" />
          </svg>
        </button>
        <span className="ml-[21px] h-[47px] w-1 shrink-0 bg-[#0a8377]" />
        <input
          type="text"
          aria-label="Сообщение"
          placeholder="Введите текст"
          value={text}
          onChange={(e) => setText(e.target.value)}
          className="-ml-1 h-12 min-w-0 flex-1 pt-1 text-[35px] leading-[44px] text-[#141414] caret-[#0a8377] outline-none placeholder:text-[#a9a9a9]"
        />
        <button type="button" aria-label="Прикрепить">
          <svg viewBox="0 0 42 40" className="h-10 w-[42px]" fill="none" stroke="currentColor" strokeWidth="2.700" strokeLinecap="round" strokeLinejoin="round">
            <path d="M22.500 5.500L36.500 20Q42.500 27 37 34Q30 40 23 34L4 14.500Q.500 9 4.500 4.500Q9.500 .500 14.500 4.500L31.500 21.500Q33.500 25 31 27.500Q28 29.500 25 27L13 15" />
          </svg>
        </button>
        <button type="button" aria-label="Камера" className="ml-[44px]">
          <svg viewBox="0 0 40 38" className="h-[38px] w-10" fill="currentColor">
            <path fillRule="evenodd" d="M14 1H26Q28 1 29.500 3L32 6H35Q39 6 39 10V32Q39 36.500 35 36.500H5Q1 36.500 1 32V10Q1 6 5 6H8L10.500 3Q12 1 14 1ZM20 10A9.500 9.500 0 1 0 20 29A9.500 9.500 0 1 0 20 10ZM20 13A6.500 6.500 0 1 1 20 26A6.500 6.500 0 1 1 20 13Z" />
          </svg>
        </button>
      </div>
      <button type="button" aria-label="Голосовое сообщение" className="flex size-[91px] shrink-0 items-center justify-center rounded-full bg-[#00887a] text-white shadow-[0_2px_4px_rgba(0,0,0,0.3)]">
        <svg viewBox="0 0 30 40" className="h-10 w-[30px]" fill="none" stroke="currentColor" strokeWidth="3.800" strokeLinecap="round">
          <rect x="9" y="0" width="12" height="24" rx="6" fill="currentColor" stroke="none" />
          <path d="M2.500 19.500Q4 30 15 30T27.500 19.500M15 30V38" />
        </svg>
      </button>
    </form>
  )
}

function NavBar() {
  return (
    <nav className="flex h-[94px] bg-[#f1f1f1] pr-[58px] pl-[54px] text-[#8b8b8b]">
      <button aria-label="Недавние" className="flex flex-1 items-center justify-center">
        <svg viewBox="0 0 30 32" className="h-8 w-[30px]" stroke="currentColor" strokeWidth="3.600" strokeLinecap="round">
          <path d="M3.500 4V28M15 4V28M26.500 4V28" />
        </svg>
      </button>
      <button aria-label="Главный экран" className="flex flex-1 items-center justify-center">
        <svg viewBox="0 0 32 32" className="size-8" fill="none" stroke="currentColor" strokeWidth="3.400">
          <rect x="2" y="2" width="28" height="28" rx="8" />
        </svg>
      </button>
      <button aria-label="Назад" className="flex flex-1 items-center justify-center">
        <svg viewBox="0 0 32 32" className="size-8" fill="none" stroke="currentColor" strokeWidth="3.400" strokeLinecap="round">
          <path d="M23 3L9 16L23 29" />
        </svg>
      </button>
    </nav>
  )
}

function App() {
  return (
    <div className="flex min-h-screen flex-col font-[Roboto,'Noto_Sans',sans-serif] select-none">
      <EmojiDefs />
      <StatusBar />
      <Header />
      <main className="relative flex flex-1 flex-col overflow-hidden bg-linear-to-b from-[#eaeae5] via-[#eee6dd] via-25% to-[#eee3dc]">
        <Wallpaper />
        <Conversation />
        <Composer />
        <button
          aria-label="Прокрутить вниз"
          className="absolute right-[22px] bottom-[135px] flex size-16 items-center justify-center rounded-full bg-[#fbfaf9]/95 text-[#5f5f5f] shadow-[0_1px_2px_rgba(0,0,0,0.2)]"
        >
          <svg viewBox="0 0 24 24" className="mt-1 size-6" fill="none" stroke="currentColor" strokeWidth="2.600">
            <path d="M1 2.500L12 11.500L23 2.500M1 12L12 21L23 12" />
          </svg>
        </button>
        <div className="absolute top-[472px] right-0 h-[268px] w-[9px] rounded-l-[10px] border border-r-0 border-[#a8a6a3] bg-white/80" />
      </main>
      <NavBar />
    </div>
  )
}

export default App
